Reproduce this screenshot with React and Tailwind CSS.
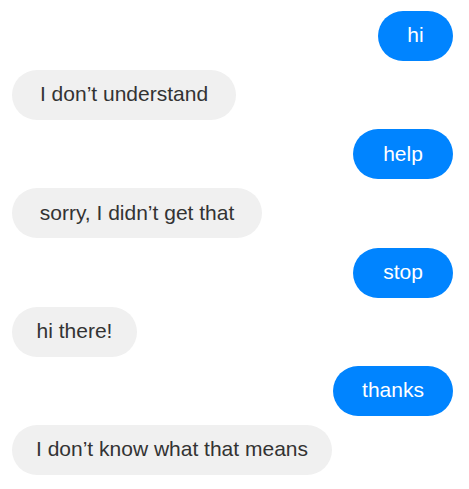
const messages = [
  { from: "me", text: "hi", w: "w-[75px]" },
  { from: "bot", text: "I don’t understand", w: "w-[224px]" },
  { from: "me", text: "help", w: "w-[100px]" },
  { from: "bot", text: "sorry, I didn’t get that", w: "w-[250px]" },
  { from: "me", text: "stop", w: "w-[100px]" },
  { from: "bot", text: "hi there!", w: "w-[125px]" },
  { from: "me", text: "thanks", w: "w-[120px]" },
  { from: "bot", text: "I don’t know what that means", w: "w-[320px]" },
];

export default function App() {
  return (
    <div className="w-[469px] h-[489px] bg-white pt-[11px] pl-[12px] pr-[16px] flex flex-col gap-[9.14px] font-['Liberation_Sans',Arial,sans-serif]">
      {messages.map((m, i) => (
        <div key={i} className={`flex ${m.from === "me" ? "justify-end" : "justify-start"}`}>
          <div
            className={`${m.w} h-[50px] pb-[2px] rounded-full flex items-center justify-center text-[21px] whitespace-nowrap ${
              m.from === "me" ? "bg-[#0084ff] text-white" : "bg-[#f0f0f0] text-[#333333]"
            }`}
          >
            {m.text}
          </div>
        </div>
      ))}
    </div>
  );
}
